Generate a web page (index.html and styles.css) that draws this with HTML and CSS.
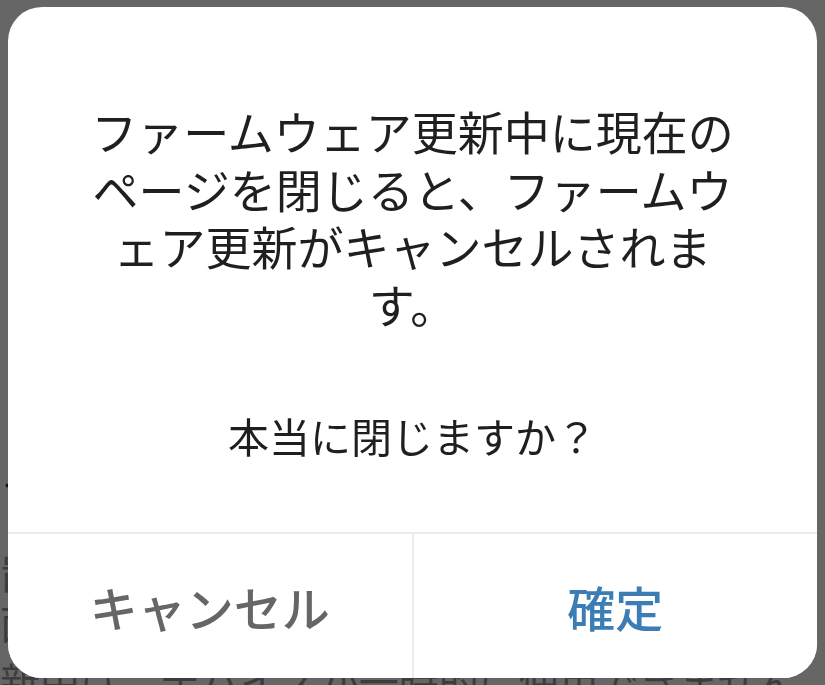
FILE: index.html
```html
<!DOCTYPE html>
<html lang="ja">
<head>
<meta charset="utf-8">
<title>ダイアログ</title>
<link rel="stylesheet" href="styles.css">
</head>
<body>
<div class="page">
  <p class="page-line dark">ファームウェア</p>
  <p class="page-line">置されているデバイス</p>
  <p class="page-line">面のファームウェアに更</p>
  <p class="page-line last">新中は、デバイスが一時的に使用できません。</p>
</div>
<div class="overlay">
  <div class="dialog" role="dialog">
    <div class="body">
      <p class="message">ファームウェア更新中に現在のページを閉じると、ファームウェア更新がキャンセルされます。</p>
      <p class="question">本当に閉じますか？</p>
    </div>
    <div class="actions">
      <button class="btn cancel">キャンセル</button>
      <button class="btn confirm">確定</button>
    </div>
  </div>
</div>
</body>
</html>
```

FILE: styles.css
```css
html, body {
  margin: 0;
  padding: 0;
  width: 825px;
  height: 685px;
  overflow: hidden;
  background: #666666;
  font-family: "Noto Sans CJK JP", "Noto Sans", sans-serif;
}

.page {
  width: 825px;
  padding-top: 470px;
  overflow: hidden;
}

.page-line {
  margin: 0;
  font-size: 40px;
  line-height: 50px;
  color: #3c3c3c;
  white-space: nowrap;
}

.page-line.dark {
  color: #111111;
  margin-bottom: 27px;
}

.page-line.last {
  margin-top: 8px;
}

.overlay {
  position: fixed;
  inset: 0;
}

.dialog {
  position: absolute;
  left: 8px;
  top: 7px;
  width: 809px;
  height: 671px;
  background: #ffffff;
  border-radius: 34px;
  display: flex;
  flex-direction: column;
  overflow: hidden;
}

.body {
  flex: 1;
  padding: 95px 62px 0;
  text-align: center;
  color: #1f1f1f;
}

.message {
  margin: 0;
  font-size: 46px;
  line-height: 57.5px;
  line-break: loose;
  word-break: normal;
}

.question {
  margin: 78px 0 0;
  font-size: 41px;
  line-height: 51px;
}

.actions {
  height: 144px;
  display: flex;
  border-top: 2px solid #ebebeb;
}

.btn {
  flex: 1;
  margin: 0;
  padding: 0;
  border: none;
  background: #ffffff;
  font-family: inherit;
  font-size: 48px;
  font-weight: 500;
  line-height: 1;
}

.cancel {
  color: #666666;
}

.confirm {
  color: #3d7db5;
  border-left: 2px solid #ebebeb;
}
```
